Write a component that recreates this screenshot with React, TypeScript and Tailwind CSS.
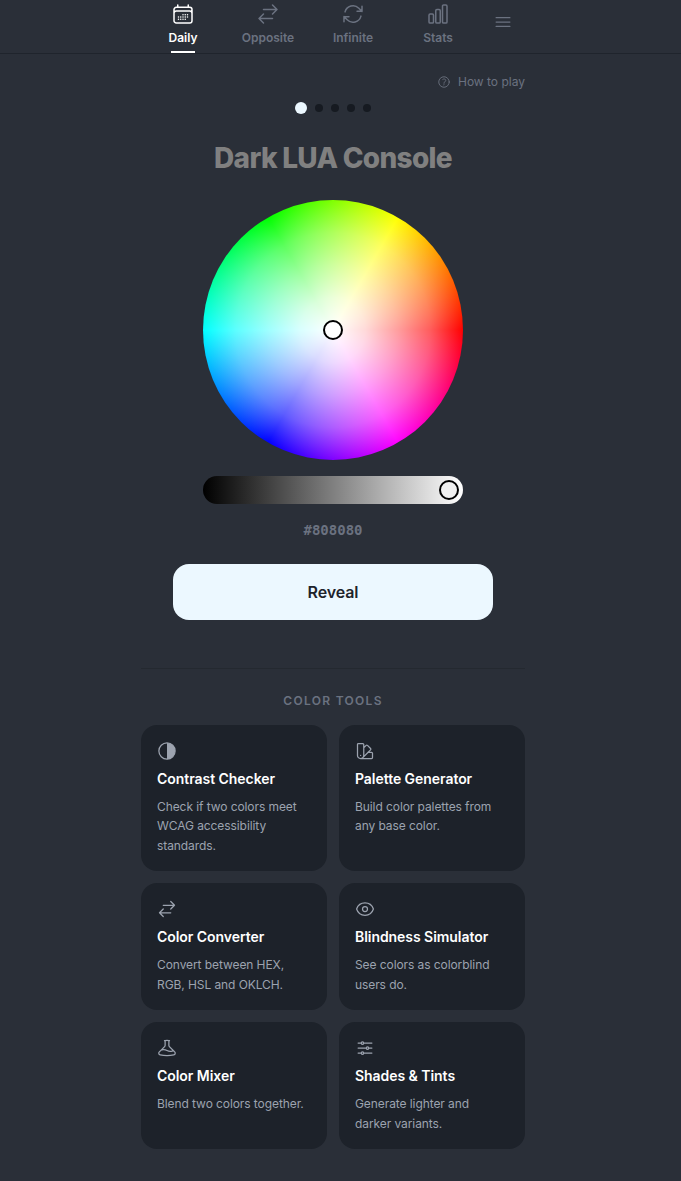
import React from "react";
import {
  HiOutlineCalendarDays,
  HiOutlineArrowsRightLeft,
  HiOutlineArrowPath,
  HiOutlineChartBar,
  HiOutlineBars3,
  HiOutlineQuestionMarkCircle,
  HiOutlineSwatch,
  HiOutlineEye,
  HiOutlineBeaker,
  HiOutlineAdjustmentsHorizontal,
} from "react-icons/hi2";

function HalfCircle() {
  return (
    <svg width="20" height="20" viewBox="0 0 24 24" fill="none" stroke="currentColor" strokeWidth="1.5">
      <circle cx="12" cy="12" r="9.75" />
      <path d="M12 2.25a9.75 9.75 0 0 1 0 19.5z" fill="currentColor" stroke="none" />
    </svg>
  );
}

function NavItem({ icon, label, active }: { icon: React.ReactNode; label: string; active?: boolean }) {
  return (
    <div className={`relative flex h-[53px] w-[85px] flex-col items-center pt-px ${active ? "text-white" : "text-[#6b7280]"}`}>
      <div className="flex h-[26px] items-center">{icon}</div>
      <span className="mt-px text-xs leading-5 font-semibold">{label}</span>
      {active && <div className="absolute bottom-0 h-0.5 w-6 bg-white" />}
    </div>
  );
}

function ToolCard({ icon, title, desc }: { icon: React.ReactNode; title: string; desc: string }) {
  return (
    <div className="rounded-2xl bg-[#1d222a] p-4">
      <div className="flex h-5 items-center text-[#9ca3af]">{icon}</div>
      <h3 className="mt-2 text-sm leading-5 font-semibold tracking-[-0.05px] text-white">{title}</h3>
      <p className="mt-2 pr-1 text-xs leading-[19.5px] tracking-[-0.08px] text-[#9ca3af]">{desc}</p>
    </div>
  );
}

export default function App() {
  return (
    <div className="min-h-[1181px] bg-[#2a2f38] font-['Inter',sans-serif]">
      <nav className="border-b border-[#1f242c] pr-[15px]">
        <div className="mx-auto flex w-[385px] items-start">
          <NavItem active icon={<HiOutlineCalendarDays size={24} />} label="Daily" />
          <NavItem icon={<HiOutlineArrowsRightLeft size={24} />} label="Opposite" />
          <NavItem icon={<HiOutlineArrowPath size={24} />} label="Infinite" />
          <NavItem icon={<HiOutlineChartBar size={24} />} label="Stats" />
          <div className="flex h-[44px] w-[45px] items-center justify-center text-[#6b7280]">
            <HiOutlineBars3 size={20} />
          </div>
        </div>
      </nav>

      <div className="pr-[15px]">
        <main className="mx-auto flex w-[384px] flex-col items-center">
          <div className="flex w-full items-center justify-end gap-[7px] pt-5 text-xs leading-4 text-[#6b7280]">
            <HiOutlineQuestionMarkCircle size={14} />
            <span>How to play</span>
          </div>
          <div className="mt-3 flex h-3 items-center gap-2">
            <div className="h-3 w-3 rounded-full bg-[#ecf8ff]" />
            <div className="h-2 w-2 rounded-full bg-[#161a21]" />
            <div className="h-2 w-2 rounded-full bg-[#161a21]" />
            <div className="h-2 w-2 rounded-full bg-[#161a21]" />
            <div className="h-2 w-2 rounded-full bg-[#161a21]" />
          </div>
          <h1 className="mt-[26px] text-[28px] leading-[36px] font-extrabold tracking-[-0.7px] text-[#808080]">Dark LUA Console</h1>

          <div className="relative mt-6 h-[260px] w-[260px] rounded-full [background:radial-gradient(closest-side,#ffffff,rgba(255,255,255,0.85)_25%,rgba(255,255,255,0.62)_50%,rgba(255,255,255,0.36)_75%,rgba(255,255,255,0)),conic-gradient(from_90deg,#ff0000,#ff00ff,#0000ff,#00ffff,#00ff00,#ffff00,#ff0000)]">
            <div className="absolute top-[120px] left-[120px] h-5 w-5 rounded-full border-2 border-black bg-white" />
          </div>

          <div className="relative mt-4 h-7 w-[260px] rounded-full bg-[linear-gradient(to_right,#000000,#ffffff)]">
            <div className="absolute top-1 right-1 h-5 w-5 rounded-full border-2 border-black bg-[#f0f0f0]" />
          </div>

          <div className="mt-4 font-['DejaVu_Sans_Mono',monospace] text-sm leading-5 font-bold text-[#6b7280]">#808080</div>

          <button className="mt-6 h-14 w-[320px] rounded-2xl bg-[#ecf8ff] text-base font-semibold tracking-[-0.1px] text-[#1e232b]">Reveal</button>

          <div className="mt-12 w-full border-t border-[#242930] pt-6">
            <h2 className="text-center text-xs leading-4 font-semibold tracking-[1.3px] text-[#6b7280]">COLOR TOOLS</h2>
            <div className="mt-[15.75px] grid grid-cols-2 gap-3">
              <ToolCard icon={<HalfCircle />} title="Contrast Checker" desc="Check if two colors meet WCAG accessibility standards." />
              <ToolCard icon={<HiOutlineSwatch size={20} />} title="Palette Generator" desc="Build color palettes from any base color." />
              <ToolCard icon={<HiOutlineArrowsRightLeft size={20} />} title="Color Converter" desc="Convert between HEX, RGB, HSL and OKLCH." />
              <ToolCard icon={<HiOutlineEye size={20} />} title="Blindness Simulator" desc="See colors as colorblind users do." />
              <ToolCard icon={<HiOutlineBeaker size={20} />} title="Color Mixer" desc="Blend two colors together." />
              <ToolCard icon={<HiOutlineAdjustmentsHorizontal size={20} />} title="Shades & Tints" desc="Generate lighter and darker variants." />
            </div>
          </div>
        </main>
      </div>
    </div>
  );
}
